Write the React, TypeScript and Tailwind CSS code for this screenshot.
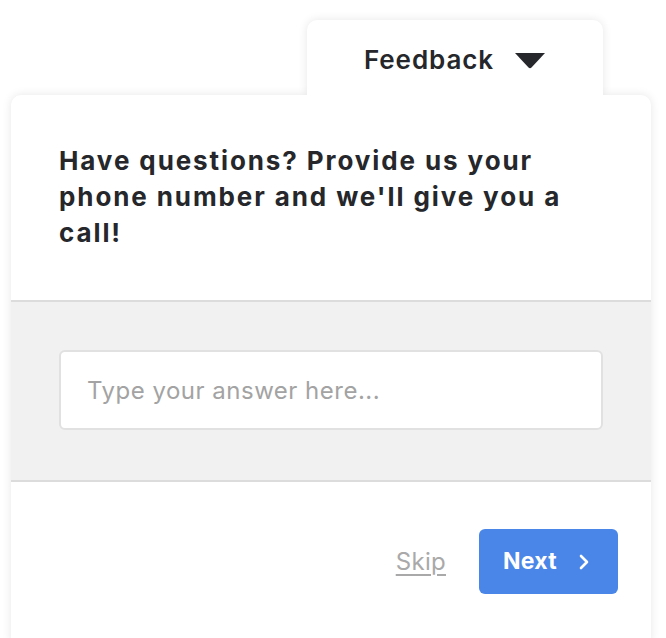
import React from "react";

export default function App() {
  return (
    <div
      className="min-h-[638px] bg-white pt-[20px] pl-[11px] overflow-hidden"
      style={{ fontFamily: "Inter, 'Noto Sans', 'Liberation Sans', sans-serif" }}
    >
      <div className="w-[640px]">
        <div className="flex">
          <div className="ml-[296px] w-[296px] h-[75px] bg-white rounded-t-[10px] shadow-[0_0_10px_rgba(0,0,0,0.10)] [clip-path:inset(-20px_-20px_0_-20px)] relative z-10 flex items-center justify-center gap-[20px] pt-[4px]">
            <span className="text-[26px] font-semibold text-[#25272b] tracking-[0.9px]">Feedback</span>
            <svg width="32" height="17" viewBox="0 0 32 17" className="mt-[1px]">
              <path d="M1 1 H31 L17.5 15.5 Q16 17 14.5 15.5 Z" fill="#25272b" />
            </svg>
          </div>
        </div>
        <div className="bg-white rounded-t-[10px] shadow-[0_0_10px_rgba(0,0,0,0.10)] overflow-hidden">
          <div className="px-[48px] pt-[48px] pb-[49px]">
            <h2 className="text-[26px] leading-[36px] font-bold text-[#25272b] tracking-[1.9px]">
              Have questions? Provide us your phone number and we'll give you a call!
            </h2>
          </div>
          <div className="border-t-2 border-b-2 border-[#dcdcdc] bg-[#f1f1f1] px-[48px] pt-[48px] pb-[50px]">
            <input
              type="text"
              placeholder="Type your answer here..."
              className="w-full h-[80px] bg-white border-2 border-[#e1e1e1] rounded-[6px] px-[26px] text-[24px] tracking-[0.5px] text-[#25272b] placeholder:text-[#a3a3a3] outline-none"
            />
          </div>
          <div className="flex items-center justify-end gap-[33px] pr-[33px] pt-[47px] pb-[48px]">
            <a className="text-[24px] tracking-[0.3px] text-[#a9a9a9] underline underline-offset-[4px] decoration-[2px] cursor-pointer">
              Skip
            </a>
            <button className="h-[65px] w-[139px] bg-[#4a86e8] rounded-[6px] flex items-center pl-[24px] gap-[22px] text-white">
              <span className="text-[23px] font-bold tracking-[0.3px]">Next</span>
              <svg width="10" height="16" viewBox="0 0 10 16">
                <path d="M2 2 L8 8 L2 14" fill="none" stroke="white" strokeWidth="2.6" strokeLinecap="round" strokeLinejoin="round" />
              </svg>
            </button>
          </div>
        </div>
      </div>
    </div>
  );
}
